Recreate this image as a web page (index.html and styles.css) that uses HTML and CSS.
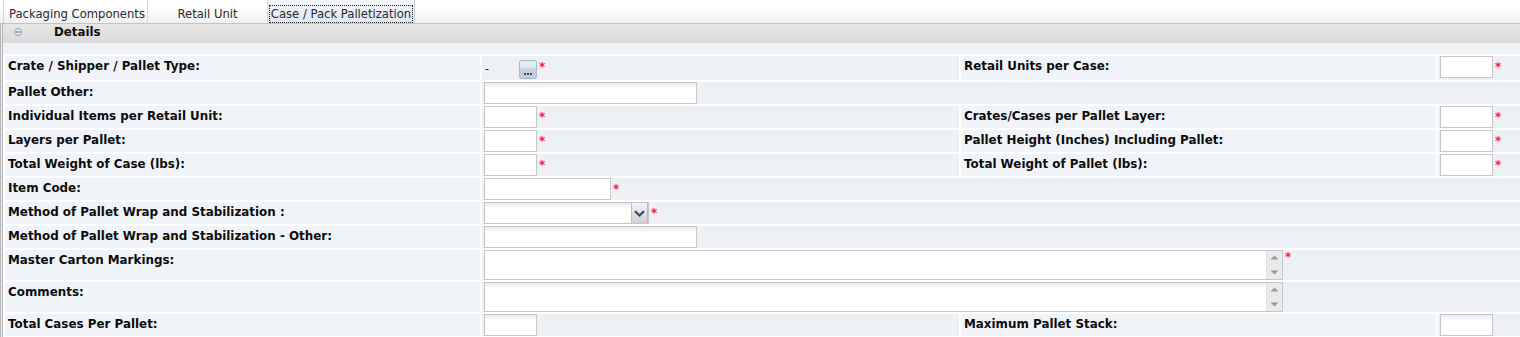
FILE: index.html
```html
<!DOCTYPE html>
<html>
<head>
<meta charset="utf-8">
<link rel="stylesheet" href="styles.css">
</head>
<body>
<div class="tabbar">
  <div class="tab tab1">Packaging Components</div>
  <div class="tab tab2">Retail Unit</div>
  <div class="tab tab3 active"><span class="focus">Case / Pack Palletization</span></div>
</div>
<div class="panel">
  <div class="section-head">
    <svg class="collapse" width="8" height="8" viewBox="0 0 8 8"><circle cx="4" cy="4" r="3.4" fill="#eef1f6" stroke="#7d8aa0" stroke-width="0.9"/><rect x="2" y="3.5" width="4" height="1" fill="#4c5a78"/></svg>
    <span class="section-title">Details</span>
  </div>
  <div class="body">
    <table class="form">
      <colgroup><col class="c1"><col class="c2"><col class="c3"><col class="c4"></colgroup>
      <tr class="r24">
        <td class="lbl">Crate / Shipper / Pallet Type:</td>
        <td class="fld"><div class="line pick"><span class="dash">-</span><span class="dots-btn"><i></i><i></i><i></i></span><span class="req">*</span></div></td>
        <td class="lbl">Retail Units per Case:</td>
        <td class="fld"><div class="line"><span class="inp w53"></span><span class="req">*</span></div></td>
      </tr>
      <tr>
        <td class="lbl">Pallet Other:</td>
        <td class="fld" colspan="3"><div class="line"><span class="inp w213 grad"></span></div></td>
      </tr>
      <tr>
        <td class="lbl">Individual Items per Retail Unit:</td>
        <td class="fld"><div class="line"><span class="inp w53"></span><span class="req">*</span></div></td>
        <td class="lbl">Crates/Cases per Pallet Layer:</td>
        <td class="fld"><div class="line"><span class="inp w53"></span><span class="req">*</span></div></td>
      </tr>
      <tr>
        <td class="lbl">Layers per Pallet:</td>
        <td class="fld"><div class="line"><span class="inp w53"></span><span class="req">*</span></div></td>
        <td class="lbl">Pallet Height (Inches) Including Pallet:</td>
        <td class="fld"><div class="line"><span class="inp w53"></span><span class="req">*</span></div></td>
      </tr>
      <tr>
        <td class="lbl">Total Weight of Case (lbs):</td>
        <td class="fld"><div class="line"><span class="inp w53"></span><span class="req">*</span></div></td>
        <td class="lbl">Total Weight of Pallet (lbs):</td>
        <td class="fld"><div class="line"><span class="inp w53"></span><span class="req">*</span></div></td>
      </tr>
      <tr>
        <td class="lbl">Item Code:</td>
        <td class="fld" colspan="3"><div class="line"><span class="inp w127"></span><span class="req">*</span></div></td>
      </tr>
      <tr>
        <td class="lbl">Method of Pallet Wrap and Stabilization :</td>
        <td class="fld" colspan="3"><div class="line"><span class="select"><span class="sel-text"></span><span class="sel-btn"><svg width="11" height="7" viewBox="0 0 11 7"><path d="M1 1.2 L5.5 5.5 L10 1.2" fill="none" stroke="#2e4a7a" stroke-width="2.2"/></svg></span></span><span class="req">*</span></div></td>
      </tr>
      <tr>
        <td class="lbl">Method of Pallet Wrap and Stabilization - Other:</td>
        <td class="fld" colspan="3"><div class="line"><span class="inp w213 grad"></span></div></td>
      </tr>
      <tr class="r30">
        <td class="lbl">Master Carton Markings:</td>
        <td class="fld" colspan="3"><div class="line"><span class="tarea"><span class="ta-text"></span><span class="ta-scroll"><svg width="9" height="5" viewBox="0 0 9 5"><path d="M0.5 4.5 L4.5 0.5 L8.5 4.5Z" fill="#9a9a9a"/></svg><svg width="9" height="5" viewBox="0 0 9 5"><path d="M0.5 0.5 L4.5 4.5 L8.5 0.5Z" fill="#9a9a9a"/></svg></span></span><span class="req">*</span></div></td>
      </tr>
      <tr class="r30">
        <td class="lbl">Comments:</td>
        <td class="fld" colspan="3"><div class="line"><span class="tarea grad"><span class="ta-text"></span><span class="ta-scroll"><svg width="9" height="5" viewBox="0 0 9 5"><path d="M0.5 4.5 L4.5 0.5 L8.5 4.5Z" fill="#9a9a9a"/></svg><svg width="9" height="5" viewBox="0 0 9 5"><path d="M0.5 0.5 L4.5 4.5 L8.5 0.5Z" fill="#9a9a9a"/></svg></span></span></div></td>
      </tr>
      <tr>
        <td class="lbl">Total Cases Per Pallet:</td>
        <td class="fld"><div class="line"><span class="inp w53 grad"></span></div></td>
        <td class="lbl">Maximum Pallet Stack:</td>
        <td class="fld"><div class="line"><span class="inp w53 grad"></span></div></td>
      </tr>
    </table>
  </div>
</div>
</body>
</html>
```
FILE: styles.css
```css
html, body {
  margin: 0;
  padding: 0;
  background: #eef2f6;
  overflow: hidden;
}
body {
  font-family: "DejaVu Sans", Verdana, sans-serif;
  color: #000;
  width: 1520px;
  height: 337px;
}
.tabbar {
  display: flex;
  height: 23px;
  background: linear-gradient(#ffffff, #ffffff 30%, #efefef);
  border-bottom: 1px solid #c4c4c4;
  padding-left: 3px;
}
.tab {
  box-sizing: border-box;
  height: 23px;
  display: flex;
  align-items: center;
  justify-content: center;
  padding-top: 4px;
  font-size: 11.6px;
  color: #2a2a2a;
  border-right: 1px solid #d6d6d6;
}
.tab1 { width: 145px; border-left: 1px solid #d6d6d6; padding-left: 3px; }
.tab2 { width: 120px; }
.tab3 { width: 147px; border-right: 1px solid #c8d0da; }
.tab.active {
  background: linear-gradient(#f4f7fa, #dfe7ef);
}
.focus {
  outline: 1px dotted #222;
  outline-offset: 0;
  padding: 2px 1px 1px 1px;
  line-height: 13px;
}
.panel {
  border-left: 3px double #b4b4b4;
}
.section-head {
  box-sizing: border-box;
  height: 19px;
  display: flex;
  align-items: center;
  background: linear-gradient(#e6e6e6, #dadada);
  padding-left: 11px;
  padding-bottom: 3px;
}
.collapse { display: block; margin-right: 32px; margin-top: -1px; }
.section-title {
  font-weight: bold;
  font-size: 11.8px;
  color: #111;
}
.body {
  padding-top: 11px;
}
.form {
  table-layout: fixed;
  width: 1517px;
  border-collapse: separate;
  border-spacing: 2px;
  background: #fff;
  margin-left: 0;
}
.form col.c1 { width: 475px; }
.form col.c2 { width: 477px; }
.form col.c3 { width: 475px; }
.form col.c4 { width: 82px; }
.form tr { height: 22px; }
.form tr.r24 { height: 24px; }
.form tr.r30 { height: 30px; }
.form td {
  padding: 0;
  vertical-align: top;
}
.lbl {
  background: #f0f4f8;
  font-weight: bold;
  font-size: 11.9px;
  line-height: 14px;
  padding: 3px 2px 0 3px !important;
  white-space: nowrap;
  overflow: hidden;
  color: #0c0c0c;
}
.fld {
  background: #edf1f5;
  padding-left: 2px !important;
}
.line {
  display: flex;
  align-items: flex-start;
}
.inp {
  box-sizing: border-box;
  display: block;
  height: 22px;
  border: 1px solid #c6c6c6;
  background: #fff;
}
.inp.grad, .tarea.grad .ta-text {
  background: linear-gradient(#eaeaea, #ffffff 6px);
}
.w53 { width: 53px; }
.w127 { width: 127px; }
.w213 { width: 213px; }
.req {
  color: #ff1a2a;
  font-size: 12px;
  line-height: 12px;
  margin-left: 2px;
  margin-top: 5px;
  font-weight: bold;
}
.pick { padding-top: 4px; }
.dash {
  font-size: 11px;
  line-height: 12px;
  margin-top: 3px;
  width: 34px;
  padding-left: 1px;
}
.dots-btn {
  box-sizing: border-box;
  width: 18px;
  height: 19px;
  border: 1px solid #a9bccc;
  border-radius: 2px;
  background: linear-gradient(#e9edf1, #e3e8ee 40%, #c9d2dc 45%, #c4ccd6);
  display: flex;
  align-items: flex-end;
  justify-content: center;
  gap: 1px;
  padding-bottom: 3px;
}
.dots-btn i {
  display: block;
  width: 2px;
  height: 2px;
  background: #3f4a5c;
}
.pick .req { margin-top: 1px; margin-left: 2px; }
.select {
  box-sizing: border-box;
  display: flex;
  width: 165px;
  height: 22px;
  border: 1px solid #c6c6c6;
  background: linear-gradient(#ebebeb, #ffffff 6px);
}
.sel-text { flex: 1; }
.sel-btn {
  width: 17px;
  height: 20px;
  box-sizing: border-box;
  border-left: 1px solid #c0c0c0;
  border-right: 1px solid #b4b8c8;
  background: linear-gradient(#f4f4f4, #d0d0d0);
  display: flex;
  align-items: center;
  justify-content: center;
  padding-top: 1px;
}
.tarea {
  box-sizing: border-box;
  display: flex;
  width: 799px;
  height: 30px;
  border: 1px solid #c6c6c6;
  background: #fff;
}
.ta-text { flex: 1; }
.ta-scroll {
  width: 16px;
  background: #eaeaea;
  border-left: 1px solid #e0e0e0;
  display: flex;
  flex-direction: column;
  align-items: center;
  justify-content: space-between;
  padding: 4px 0 4px;
  box-sizing: border-box;
}
.ta-scroll svg { display: block; }
.tarea + .req { margin-top: 1px; margin-left: 2px; }
```
